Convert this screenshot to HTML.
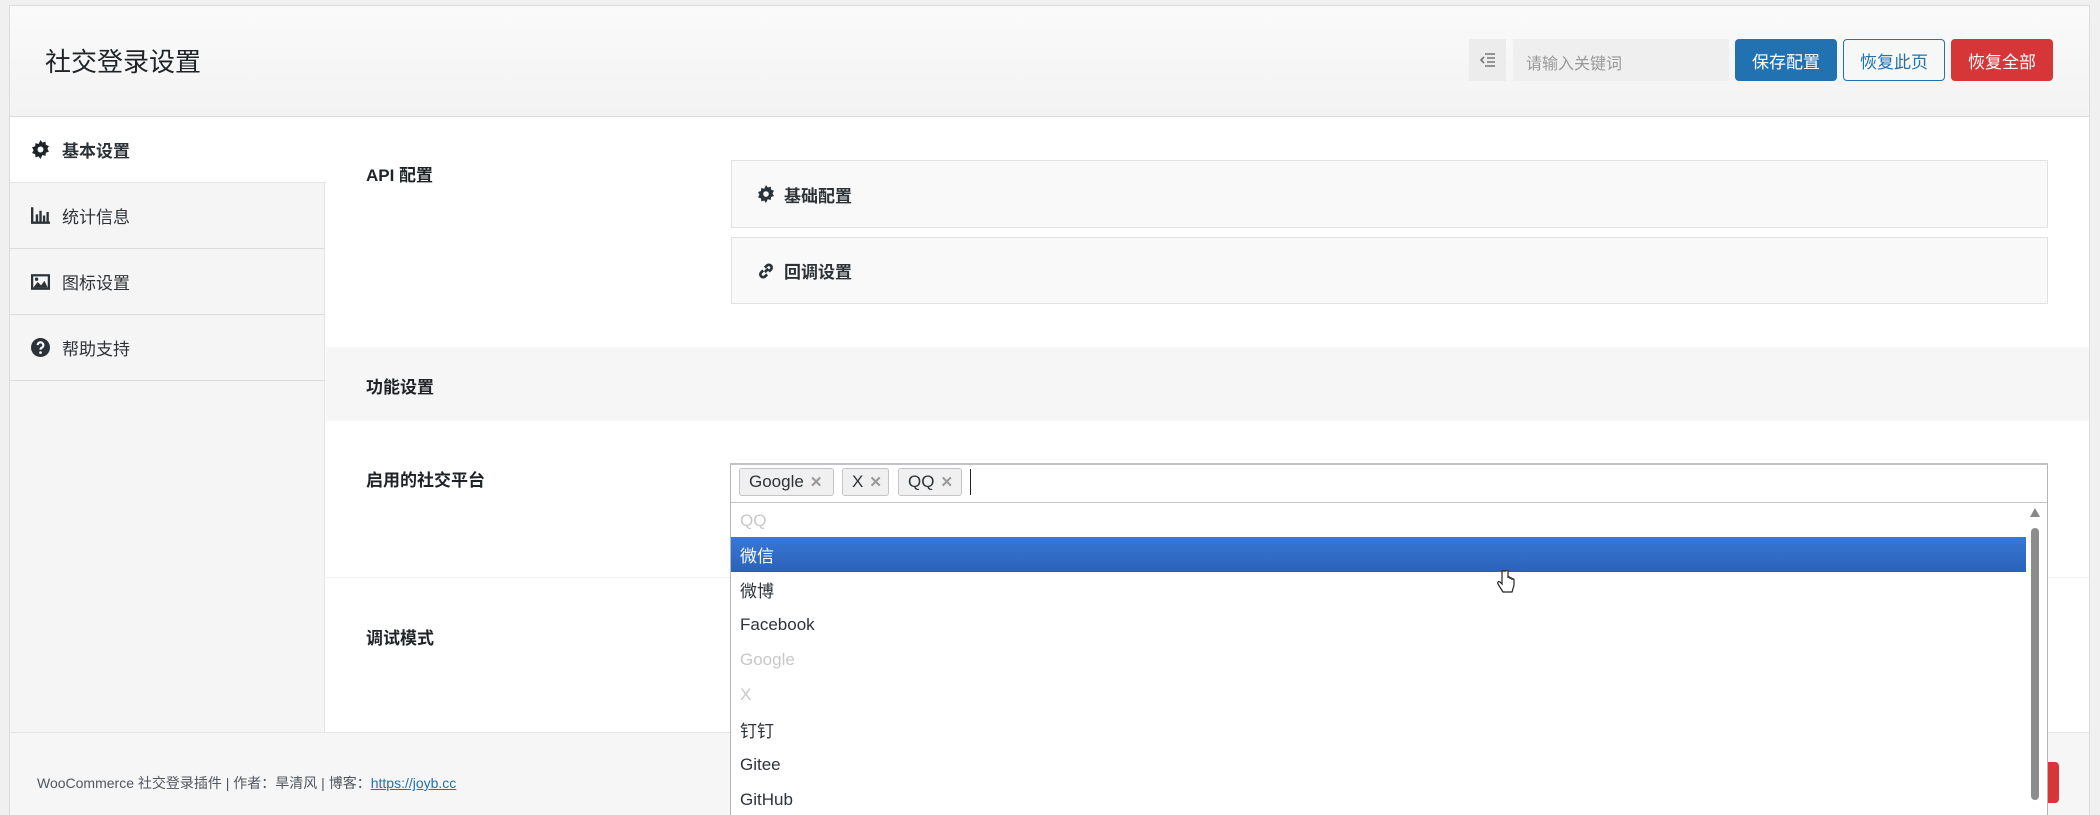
<!DOCTYPE html>
<html style="overflow:hidden;height:815px"><head><meta charset="utf-8">
<style>
*{box-sizing:border-box;margin:0;padding:0}
body{width:2100px;height:815px;background:#f0f0f1;font-family:"Liberation Sans","Noto Sans CJK SC",sans-serif;color:#1d2327;position:relative;overflow:hidden}
.abs{position:absolute}
#frame{left:9px;top:5px;width:2081px;height:810px;background:#fff;border:1px solid #dcdcde;border-bottom:none}
#hdr{left:10px;top:6px;width:2079px;height:111px;background:linear-gradient(#fafafa,#f3f3f3);border-bottom:1px solid #dcdcde}
.t{font-size:26px;color:#1d2327}
#side{left:10px;top:117px;width:315px;height:615px;background:#f5f5f5;border-right:1px solid #e4e4e4}
.it{position:absolute;left:0;width:315px;height:66px;border-bottom:1px solid #dcdcde;font-size:17px;color:#2c3338;display:flex;align-items:center;padding-left:21px}
.it svg{margin-right:12px}
.lbl{font-size:17px;font-weight:bold;color:#1d2327}
.panel{left:731px;width:1317px;background:#f9f9f9;border:1px solid #e2e2e2;font-size:17px;font-weight:bold;display:flex;align-items:center;padding-left:25px;color:#2c3338}
.panel svg{margin-right:9px}
.btn{top:39px;height:42px;width:102px;border-radius:4px;font-size:17px;display:flex;align-items:center;justify-content:center}
.tag{top:468px;height:28px;border:1px solid #c3c4c7;background:#f0f0f0;border-radius:3px;font-size:17px;display:flex;align-items:center;padding-left:9px;color:#2c3338}
.tag span{color:#999;margin-left:6px;font-size:15px;font-weight:bold}
.opt{left:731px;width:1295px;height:35px;font-size:17px;padding-left:9px;display:flex;align-items:center;color:#2c3338}
</style></head><body>
<div id="frame" class="abs"></div>
<div id="hdr" class="abs"></div>
<div class="abs t" style="left:45px;top:42px">社交登录设置</div>
<div class="abs" style="left:1469px;top:39px;width:37px;height:42px;background:#ececec;display:flex;align-items:center;justify-content:center">
<svg width="16" height="14" viewBox="0 0 16 14"><path d="M5 1h10M7 5h8M7 9h8M5 13h10M4 4l-3 3 3 3" stroke="#777" stroke-width="1.6" fill="none"/></svg></div>
<div class="abs" style="left:1513px;top:39px;width:216px;height:42px;background:#efefef;font-size:16px;color:#999;padding:11px 0 0 13px">请输入关键词</div>
<div class="abs btn" style="left:1735px;background:#2271b1;color:#fff">保存配置</div>
<div class="abs btn" style="left:1843px;background:#f6f7f7;border:1px solid #2271b1;color:#2271b1">恢复此页</div>
<div class="abs btn" style="left:1951px;background:#d63638;color:#fff">恢复全部</div>

<div id="side" class="abs">
<div class="it" style="top:0;height:66px;background:#fff;border-bottom:1px solid #e4e4e4;width:316px"><svg width="19" height="19" viewBox="0 0 16 16"><path d="M8 0l1.6 2.2 2.6-.8.3 2.7 2.6.9-1.3 2.4 1.3 2.4-2.6.9-.3 2.7-2.6-.8L8 16l-1.6-2.2-2.6.8-.3-2.7-2.6-.9L2.2 8.6.9 6.2l2.6-.9.3-2.7 2.6.8z" fill="#1d2327"/><circle cx="8" cy="8" r="2.5" fill="#fff"/></svg><b style="font-weight:bold">基本设置</b></div>
<div class="it" style="top:66px"><svg width="19" height="17" viewBox="0 0 16 14"><path d="M1 0v13h15M5 6v6M8 3v9M11 7v5M14 4v8" stroke="#2c3338" stroke-width="2" fill="none"/></svg>统计信息</div>
<div class="it" style="top:132px"><svg width="19" height="16" viewBox="0 0 17 14"><rect x="1" y="1" width="15" height="12" stroke="#2c3338" stroke-width="2" fill="none"/><path d="M2 12l4-5 3 3 3-4 3 6z" fill="#2c3338"/><circle cx="5" cy="4.5" r="1.5" fill="#2c3338"/></svg>图标设置</div>
<div class="it" style="top:198px"><svg width="19" height="19" viewBox="0 0 16 16"><circle cx="8" cy="8" r="8" fill="#2c3338"/><path d="M5.6 6a2.4 2.4 0 1 1 3.4 2.2c-.7.4-1 .8-1 1.6" stroke="#fff" stroke-width="1.8" fill="none"/><circle cx="8" cy="12.3" r="1.1" fill="#fff"/></svg>帮助支持</div>
</div>

<div class="abs lbl" style="left:366px;top:161px">API 配置</div>
<div class="abs panel" style="top:160px;height:68px"><svg width="18" height="18" viewBox="0 0 16 16"><path d="M8 0l1.6 2.2 2.6-.8.3 2.7 2.6.9-1.3 2.4 1.3 2.4-2.6.9-.3 2.7-2.6-.8L8 16l-1.6-2.2-2.6.8-.3-2.7-2.6-.9L2.2 8.6.9 6.2l2.6-.9.3-2.7 2.6.8z" fill="#2c3338"/><circle cx="8" cy="8" r="2.5" fill="#f9f9f9"/></svg>基础配置</div>
<div class="abs panel" style="top:237px;height:67px"><svg width="18" height="18" viewBox="0 0 16 16"><path d="M7 9l3-3M5.5 7.5l-2 2a2.5 2.5 0 0 0 3.5 3.5l2-2M10.5 8.5l2-2A2.5 2.5 0 0 0 9 3l-2 2" stroke="#2c3338" stroke-width="2.4" fill="none"/></svg>回调设置</div>

<div class="abs" style="left:326px;top:347px;width:1763px;height:74px;background:#f6f6f6"></div>
<div class="abs lbl" style="left:366px;top:373px">功能设置</div>
<div class="abs" style="left:326px;top:577px;width:1763px;height:1px;background:#f0f0f0"></div>
<div class="abs lbl" style="left:366px;top:466px">启用的社交平台</div>
<div class="abs lbl" style="left:366px;top:624px">调试模式</div>

<div class="abs" style="left:10px;top:732px;width:2079px;height:83px;background:#f6f6f6;border-top:1px solid #e4e4e4"></div>
<div class="abs" style="left:37px;top:773px;font-size:14px;color:#50575e">WooCommerce 社交登录插件 | 作者：旱清风 | 博客：<span style="color:#2271b1;text-decoration:underline">https://joyb.cc</span></div>
<div class="abs" style="left:2047px;top:762px;width:12px;height:41px;background:#d63638;border-radius:0 4px 4px 0"></div>

<div class="abs" style="left:730px;top:463px;width:1318px;height:352px;background:#fff;border:1px solid #b5b5b5;border-top:2px solid #c3c4c7;border-bottom:none"></div>
<div class="abs" style="left:731px;top:502px;width:1316px;height:1px;background:#c3c4c7"></div>
<div class="abs tag" style="left:739px;width:95px">Google<span>✕</span></div>
<div class="abs tag" style="left:842px;width:47px">X<span>✕</span></div>
<div class="abs tag" style="left:898px;width:64px">QQ<span>✕</span></div>
<div class="abs" style="left:970px;top:469px;width:1px;height:26px;background:#222"></div>
<div class="abs opt" style="top:503px;color:#c8c8c8">QQ</div>
<div class="abs opt" style="top:537px;background:linear-gradient(#3878d6,#2b62b9);color:#fff">微信</div>
<div class="abs opt" style="top:572px">微博</div>
<div class="abs opt" style="top:607px">Facebook</div>
<div class="abs opt" style="top:642px;color:#c8c8c8">Google</div>
<div class="abs opt" style="top:677px;color:#c8c8c8">X</div>
<div class="abs opt" style="top:712px">钉钉</div>
<div class="abs opt" style="top:747px">Gitee</div>
<div class="abs opt" style="top:782px">GitHub</div>
<div class="abs" style="left:2030px;top:508px;width:0;height:0;border-left:5px solid transparent;border-right:5px solid transparent;border-bottom:9px solid #888"></div>
<div class="abs" style="left:2031px;top:528px;width:8px;height:272px;background:#8c8c8c;border-radius:4px"></div>
<svg class="abs" style="left:1497px;top:570px" width="18" height="26" viewBox="0 0 18 26"><path d="M5 1v13l-2-2c-1.5-1-3 .5-2 2l5 8h9l2-7v-5c0-1.5-2-1.5-2 0v-1c0-1.5-2-1.5-2 0v-1c0-1.5-2-1.5-2 0V1c0-1.3-2-1.3-2 0z" fill="#fff" stroke="#222" stroke-width="1.2"/></svg>
</body></html>
